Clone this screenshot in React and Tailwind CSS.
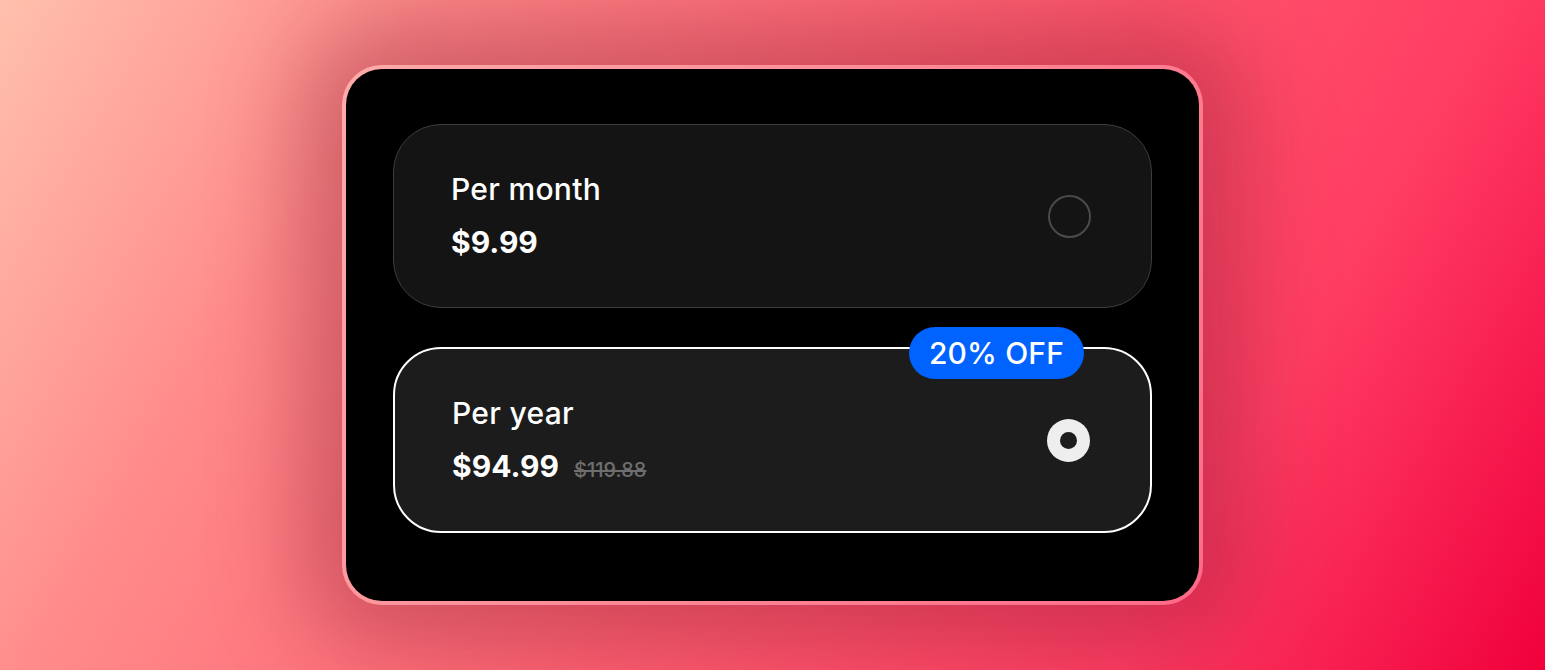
import React, { useState } from 'react';

const plans = [
  { id: 'month', label: 'Per month', price: '$9.99' },
  { id: 'year', label: 'Per year', price: '$94.99', was: '$119.88', badge: '20% OFF' },
];

const PlanOption = ({ plan, selected, onSelect }) => (
  <button
    onClick={onSelect}
    className={`relative flex w-full items-center justify-between rounded-[48px] pl-[57px] pr-[60px] text-left ${
      selected ? 'h-[186px] border-2 border-white bg-[#1c1c1c]' : 'h-[184px] border border-[#3d3d3d] bg-[#141414]'
    }`}
  >
    {plan.badge && (
      <span className="absolute -top-[22px] right-[66px] flex h-[52px] items-center rounded-full bg-[#0062ff] px-[20px] text-[30px] font-medium tracking-[0.005em] text-white">
        {plan.badge}
      </span>
    )}
    <div className="flex flex-col gap-[15px]">
      <span className="text-[30px] font-medium leading-[36px] tracking-[0.01em] text-white">{plan.label}</span>
      <div className="flex items-baseline gap-[15px]">
        <span className="text-[30px] font-bold leading-[40px] text-white">{plan.price}</span>
        {plan.was && (
          <span className="text-[20px] font-medium text-[#6e6e6e] line-through">{plan.was}</span>
        )}
      </div>
    </div>
    {selected ? (
      <span className="flex h-[43px] w-[43px] items-center justify-center rounded-full bg-[#eeeeee]">
        <span className="h-[17px] w-[17px] rounded-full bg-[#1c1c1c]" />
      </span>
    ) : (
      <span className="h-[43px] w-[43px] rounded-full border-2 border-[#4a4a4a]" />
    )}
  </button>
);

export default function App() {
  const [plan, setPlan] = useState('year');

  return (
    <div
      className="flex h-[670px] w-full items-center justify-center bg-[linear-gradient(120deg,#ffc0ac_0%,#ff8a8a_22%,#ff6272_50%,#ff3d63_78%,#f0003c_100%)]"
      style={{ fontFamily: 'Inter, "Noto Sans", sans-serif' }}
    >
      <div className="rounded-[40px] bg-white/25 p-[4px] shadow-[0_0_90px_40px_rgba(120,20,40,0.35)]">
        <div className="flex h-[532px] w-[853px] flex-col gap-[39px] rounded-[36px] bg-black px-[47px] pt-[55px]">
          {plans.map((p) => (
            <PlanOption key={p.id} plan={p} selected={plan === p.id} onSelect={() => setPlan(p.id)} />
          ))}
        </div>
      </div>
    </div>
  );
}
